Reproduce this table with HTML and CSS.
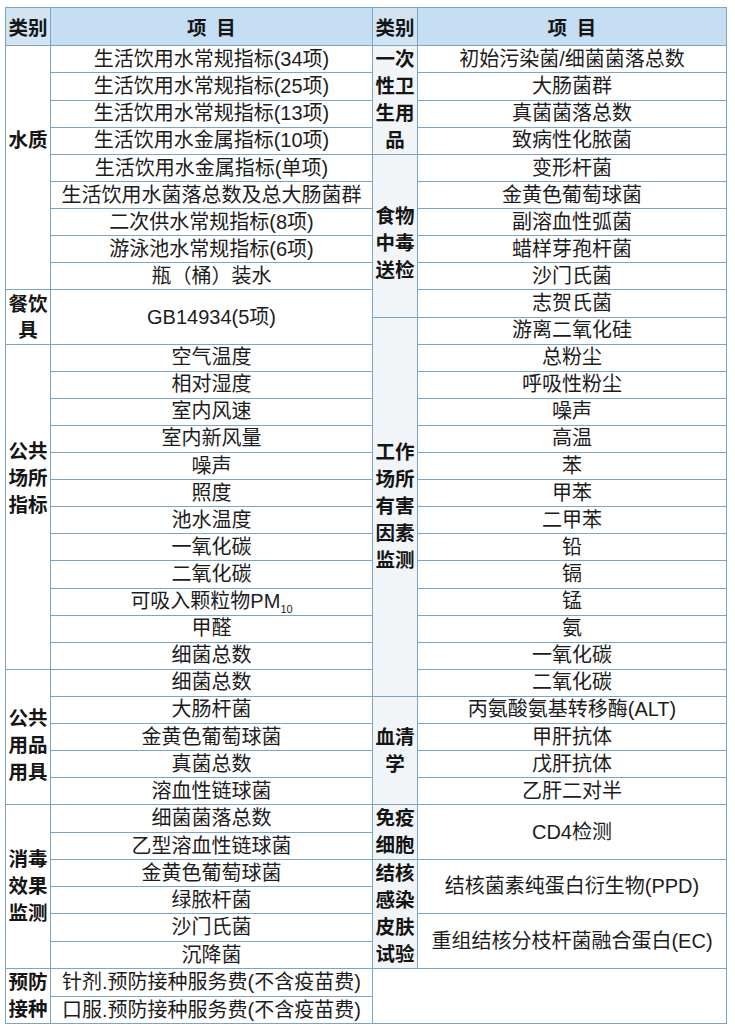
FILE: index.html
```html
<!DOCTYPE html>
<html lang="zh-CN">
<head>
<meta charset="utf-8">
<title>检测项目</title>
<link rel="stylesheet" href="styles.css">
</head>
<body>
<table class="grid">
  <colgroup>
    <col class="c-cat">
    <col class="c-item-l">
    <col class="c-cat">
    <col class="c-item-r">
  </colgroup>
  <thead>
    <tr class="head">
      <th class="cat-h">类别</th>
      <th class="item-h">项&ensp;目</th>
      <th class="cat-h">类别</th>
      <th class="item-h">项&ensp;目</th>
    </tr>
  </thead>
  <tbody>
    <tr>
      <td class="cat cat-water" rowspan="9">水质</td>
      <td class="item">生活饮用水常规指标(34项)</td>
      <td class="cat cat-r" rowspan="4">一次<br>性卫<br>生用<br>品</td>
      <td class="item">初始污染菌/细菌菌落总数</td>
    </tr>
    <tr><td class="item">生活饮用水常规指标(25项)</td><td class="item">大肠菌群</td></tr>
    <tr><td class="item">生活饮用水常规指标(13项)</td><td class="item">真菌菌落总数</td></tr>
    <tr><td class="item">生活饮用水金属指标(10项)</td><td class="item">致病性化脓菌</td></tr>
    <tr>
      <td class="item">生活饮用水金属指标(单项)</td>
      <td class="cat cat-r cat-food" rowspan="6">食物<br>中毒<br>送检</td>
      <td class="item">变形杆菌</td>
    </tr>
    <tr><td class="item">生活饮用水菌落总数及总大肠菌群</td><td class="item">金黄色葡萄球菌</td></tr>
    <tr><td class="item">二次供水常规指标(8项)</td><td class="item">副溶血性弧菌</td></tr>
    <tr><td class="item">游泳池水常规指标(6项)</td><td class="item">蜡样芽孢杆菌</td></tr>
    <tr><td class="item">瓶（桶）装水</td><td class="item">沙门氏菌</td></tr>
    <tr>
      <td class="cat cat-dish" rowspan="2">餐饮<br>具</td>
      <td class="item" rowspan="2">GB14934(5项)</td>
      <td class="item">志贺氏菌</td>
    </tr>
    <tr>
      <td class="cat cat-r" rowspan="14">工作<br>场所<br>有害<br>因素<br>监测</td>
      <td class="item">游离二氧化硅</td>
    </tr>
    <tr>
      <td class="cat cat-public" rowspan="12">公共<br>场所<br>指标</td>
      <td class="item">空气温度</td>
      <td class="item">总粉尘</td>
    </tr>
    <tr><td class="item">相对湿度</td><td class="item">呼吸性粉尘</td></tr>
    <tr><td class="item">室内风速</td><td class="item">噪声</td></tr>
    <tr><td class="item">室内新风量</td><td class="item">高温</td></tr>
    <tr><td class="item">噪声</td><td class="item">苯</td></tr>
    <tr><td class="item">照度</td><td class="item">甲苯</td></tr>
    <tr><td class="item">池水温度</td><td class="item">二甲苯</td></tr>
    <tr><td class="item">一氧化碳</td><td class="item">铅</td></tr>
    <tr><td class="item">二氧化碳</td><td class="item">镉</td></tr>
    <tr><td class="item">可吸入颗粒物PM<sub class="sub">10</sub></td><td class="item">锰</td></tr>
    <tr><td class="item">甲醛</td><td class="item">氨</td></tr>
    <tr><td class="item">细菌总数</td><td class="item">一氧化碳</td></tr>
    <tr>
      <td class="cat cat-goods" rowspan="5">公共<br>用品<br>用具</td>
      <td class="item">细菌总数</td>
      <td class="item">二氧化碳</td>
    </tr>
    <tr>
      <td class="item">大肠杆菌</td>
      <td class="cat cat-r" rowspan="4">血清<br>学</td>
      <td class="item">丙氨酸氨基转移酶(ALT)</td>
    </tr>
    <tr><td class="item">金黄色葡萄球菌</td><td class="item">甲肝抗体</td></tr>
    <tr><td class="item">真菌总数</td><td class="item">戊肝抗体</td></tr>
    <tr><td class="item">溶血性链球菌</td><td class="item">乙肝二对半</td></tr>
    <tr>
      <td class="cat" rowspan="6">消毒<br>效果<br>监测</td>
      <td class="item">细菌菌落总数</td>
      <td class="cat cat-r" rowspan="2">免疫<br>细胞</td>
      <td class="item" rowspan="2">CD4检测</td>
    </tr>
    <tr><td class="item">乙型溶血性链球菌</td></tr>
    <tr>
      <td class="item">金黄色葡萄球菌</td>
      <td class="cat cat-r" rowspan="4">结核<br>感染<br>皮肤<br>试验</td>
      <td class="item" rowspan="2">结核菌素纯蛋白衍生物(PPD)</td>
    </tr>
    <tr><td class="item">绿脓杆菌</td></tr>
    <tr>
      <td class="item">沙门氏菌</td>
      <td class="item" rowspan="2">重组结核分枝杆菌融合蛋白(EC)</td>
    </tr>
    <tr><td class="item">沉降菌</td></tr>
    <tr>
      <td class="cat" rowspan="2">预防<br>接种</td>
      <td class="item">针剂.预防接种服务费(不含疫苗费)</td>
      <td class="blank" colspan="2" rowspan="2"></td>
    </tr>
    <tr><td class="item">口服.预防接种服务费(不含疫苗费)</td></tr>
  </tbody>
</table>
</body>
</html>
```

FILE: styles.css
```css
html, body {
  margin: 0;
  padding: 0;
  background: #ffffff;
}

body {
  padding: 7px 0 0 5px;
  font-family: "Liberation Sans", "Noto Sans CJK SC", sans-serif;
  color: #1c1c1c;
}

.grid {
  border-collapse: collapse;
  table-layout: fixed;
  width: 721px;
}

.c-cat { width: 45px; }
.c-item-l { width: 322px; }
.c-item-r { width: 309px; }

.grid th,
.grid td {
  border: 1px solid #7ca5c4;
  padding: 0;
  text-align: center;
  vertical-align: middle;
}

.head { height: 38px; }

.grid tbody tr { height: 27.1px; }

.cat-h {
  background: #d2e4f2;
  font-weight: 700;
  font-size: 19.5px;
  color: #151515;
}

.item-h {
  background: #c6def3;
  font-weight: 700;
  font-size: 19.5px;
  color: #151515;
}

.item {
  font-size: 20px;
  line-height: 25px;
  white-space: nowrap;
  overflow: hidden;
}

.cat {
  font-weight: 700;
  font-size: 19.5px;
  line-height: 27px;
  color: #151515;
  background: #ffffff;
}

.cat-r { background: #f2f5f8; }

.grid .cat-water { padding-bottom: 54px; }
.grid .cat-public { padding-bottom: 56px; }
.grid .cat-goods { padding-top: 16px; }
.grid .cat-food { padding-top: 16px; }
.grid .cat-dish { line-height: 26px; }

.sub {
  font-size: 11px;
  vertical-align: -5px;
  line-height: 0;
}

.blank { background: #ffffff; }
```
